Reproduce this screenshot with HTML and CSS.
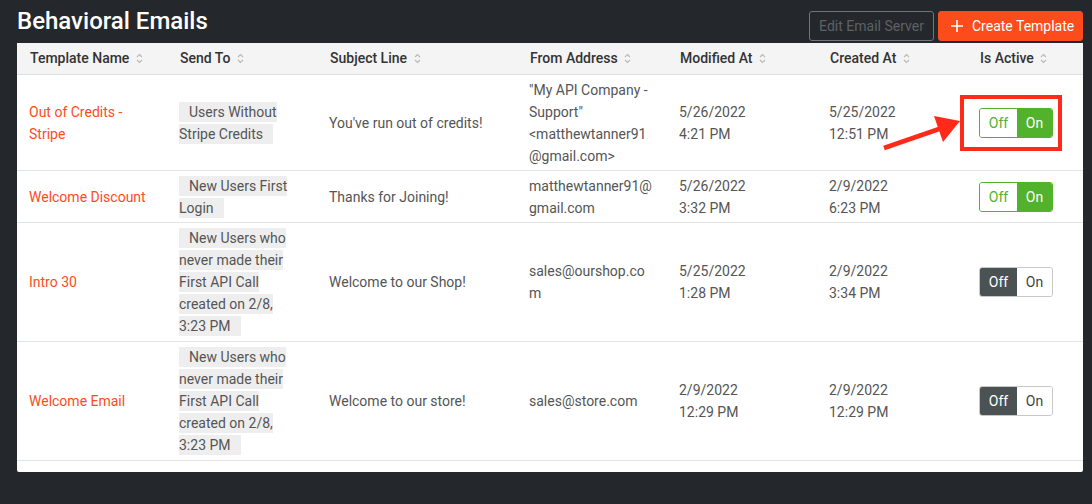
FILE: index.html
```html
<!DOCTYPE html>
<html>
<head>
<meta charset="utf-8">
<link rel="stylesheet" href="styles.css">
</head>
<body>
<div class="page">
  <div class="topbar">
    <h1 class="title">Behavioral Emails</h1>
    <div class="actions">
      <button class="btn btn-outline">Edit Email Server</button>
      <button class="btn btn-primary"><svg class="plus" width="12" height="12" viewBox="0 0 12 12"><path d="M6 0v12M0 6h12" stroke="#fff" stroke-width="1.6"/></svg>Create Template</button>
    </div>
  </div>
  <div class="card">
    <table class="grid">
      <colgroup>
        <col class="c150"><col class="c150"><col class="c200"><col class="c150"><col class="c150"><col class="c150"><col>
      </colgroup>
      <thead>
        <tr>
          <th>Template Name <span class="sort"></span></th>
          <th>Send To <span class="sort"></span></th>
          <th>Subject Line <span class="sort"></span></th>
          <th>From Address <span class="sort"></span></th>
          <th>Modified At <span class="sort"></span></th>
          <th>Created At <span class="sort"></span></th>
          <th>Is Active <span class="sort"></span></th>
        </tr>
      </thead>
      <tbody>
        <tr>
          <td><a class="name">Out of Credits - Stripe</a></td>
          <td class="send"><span class="pill">Users Without Stripe Credits</span></td>
          <td>You've run out of credits!</td>
          <td>"My API Company - Support" &lt;matthewtanner91 @gmail.com&gt;</td>
          <td>5/26/2022<br>4:21 PM</td>
          <td>5/25/2022<br>12:51 PM</td>
          <td><div class="toggle on"><span class="off">Off</span><span class="onl">On</span></div></td>
        </tr>
        <tr>
          <td><a class="name">Welcome Discount</a></td>
          <td class="send"><span class="pill">New Users First Login</span></td>
          <td>Thanks for Joining!</td>
          <td>matthewtanner91@<br>gmail.com</td>
          <td>5/26/2022<br>3:32 PM</td>
          <td>2/9/2022<br>6:23 PM</td>
          <td><div class="toggle on"><span class="off">Off</span><span class="onl">On</span></div></td>
        </tr>
        <tr class="tall">
          <td><a class="name">Intro 30</a></td>
          <td class="send"><span class="pill">New Users who never made their First API Call created on 2/8, 3:23 PM</span></td>
          <td>Welcome to our Shop!</td>
          <td>sales@ourshop.co<br>m</td>
          <td>5/25/2022<br>1:28 PM</td>
          <td>2/9/2022<br>3:34 PM</td>
          <td><div class="toggle offstate"><span class="off">Off</span><span class="onl">On</span></div></td>
        </tr>
        <tr class="tall">
          <td><a class="name">Welcome Email</a></td>
          <td class="send"><span class="pill">New Users who never made their First API Call created on 2/8, 3:23 PM</span></td>
          <td>Welcome to our store!</td>
          <td>sales@store.com</td>
          <td>2/9/2022<br>12:29 PM</td>
          <td>2/9/2022<br>12:29 PM</td>
          <td><div class="toggle offstate"><span class="off">Off</span><span class="onl">On</span></div></td>
        </tr>
      </tbody>
    </table>
  </div>
  <div class="annot-box"></div>
  <svg class="annot-arrow" width="90" height="40" viewBox="0 0 90 40">
    <path d="M2 36 L60 16" stroke="#ff2a1a" stroke-width="4.5" stroke-linecap="butt"/>
    <path d="M78 9 L52 4 L61 30 Z" fill="#ff2a1a"/>
  </svg>
</div>
</body>
</html>
```
FILE: styles.css
```css
* { box-sizing: border-box; }
html, body { margin: 0; padding: 0; }
body {
  background: #24282c;
  font-family: Roboto, "Liberation Sans", Arial, sans-serif;
  font-size: 14px;
  width: 1092px;
  height: 504px;
  overflow: hidden;
}
.page { position: relative; padding: 0 9px 0 17px; }
.topbar {
  display: flex;
  justify-content: space-between;
  align-items: flex-end;
  height: 43px;
  padding-bottom: 2px;
}
.title {
  margin: 0;
  color: #fff;
  font-size: 24px;
  font-weight: 500;
  line-height: 30px;
  align-self: flex-start;
  padding-top: 6px;
}
.actions { display: flex; gap: 4px; }
.btn {
  height: 30px;
  font-family: inherit;
  font-size: 14px;
  border-radius: 3px;
  padding: 0 8px;
  display: flex;
  align-items: center;
  white-space: nowrap;
}
.btn-outline {
  background: transparent;
  border: 1px solid #70767b;
  color: #5c6166;
  width: 125px;
  justify-content: center;
}
.btn-primary {
  background: #fc4c1c;
  border: 1px solid #fc4c1c;
  color: #fff;
  width: 145px;
  padding-left: 12px;
  padding-right: 4px;
}
.plus { margin-right: 9px; flex: none; }
.card {
  background: #fff;
  border-radius: 2px;
  padding-bottom: 11px;
}
.grid {
  width: 100%;
  border-collapse: collapse;
  table-layout: fixed;
}
.c150 { width: 150px; }
.c200 { width: 200px; }
th {
  background: #f4f4f4;
  color: #333;
  font-weight: 500;
  text-align: left;
  height: 31px;
  padding: 0 12px 0 13px;
  border-bottom: 1px solid #dde1e4;
  white-space: nowrap;
}
.sort {
  display: inline-block;
  width: 7px;
  height: 11px;
  vertical-align: -1px;
  margin-left: 3px;
  background: url("data:image/svg+xml;utf8,<svg xmlns='http://www.w3.org/2000/svg' width='7' height='11' viewBox='0 0 7 11'><path d='M1 4 L3.5 1.5 L6 4 M1 7 L3.5 9.5 L6 7' fill='none' stroke='%23b8b8b8' stroke-width='1.1'/></svg>") no-repeat;
}
td {
  color: #555;
  padding: 4px 12px 3px;
  line-height: 22px;
  vertical-align: middle;
  border-bottom: 1px solid #e2e5e8;
}
.tall td { padding-bottom: 4px; padding-top: 4px; }
td.send { padding-right: 18px; }
.name { color: #fc4c1c; }
.pill {
  background: #eeeeee;
  padding: 2px 10px;
  color: #555;
}
.toggle {
  display: inline-flex;
  height: 30px;
  border-radius: 3px;
  overflow: hidden;
  font-size: 14px;
}
.toggle span {
  display: flex;
  align-items: center;
  justify-content: center;
}
.toggle .off { width: 37px; }
.toggle .onl { width: 35px; }
.toggle.on { border: 1px solid #52b22b; }
.toggle.on .off { color: #52b22b; background: #fff; }
.toggle.on .onl { color: #fff; background: #52b22b; }
.toggle.offstate { border: 1px solid #c8c8c8; }
.toggle.offstate .off { color: #fff; background: #4a5254; }
.toggle.offstate .onl { color: #444; background: #fff; }
.annot-box {
  position: absolute;
  left: 960px;
  top: 95px;
  width: 102px;
  height: 56px;
  border: 4px solid #ff2a1a;
}
.annot-arrow {
  position: absolute;
  left: 882px;
  top: 112px;
}
```
